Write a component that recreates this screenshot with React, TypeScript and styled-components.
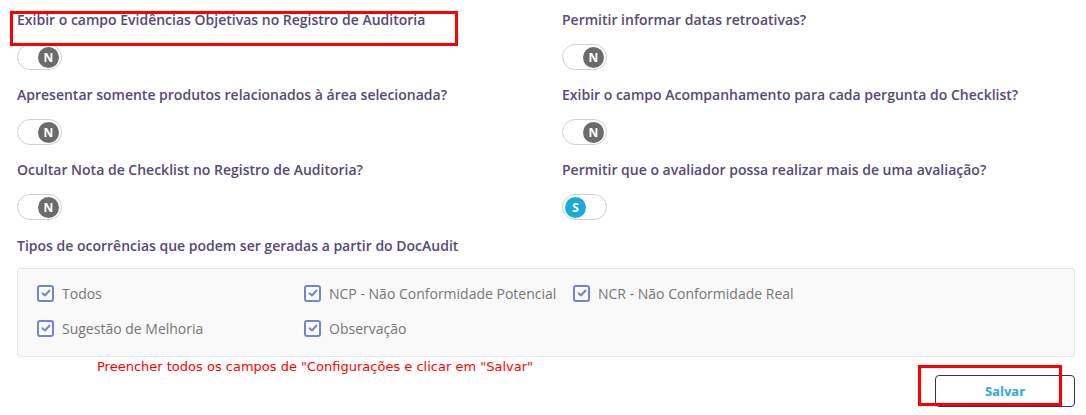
import React from "react";
import styled, { createGlobalStyle } from "styled-components";

const Global = createGlobalStyle`
  html, body { margin: 0; padding: 0; background: #ffffff; }
  body { font-family: "Open Sans", "Noto Sans", sans-serif; }
`;

const Page = styled.div`
  position: relative;
  width: 1086px;
  height: 415px;
  box-sizing: border-box;
  padding: 11px 11px 0 17px;
`;

const Grid = styled.div`
  display: grid;
  grid-template-columns: 545px 1fr;
  row-gap: 16px;
`;

const Field = styled.div`
  display: flex;
  flex-direction: column;
  align-items: flex-start;
  gap: 15px;
  height: 59px;
`;

const Label = styled.div`
  font-size: 14px;
  font-weight: 600;
  line-height: 18px;
  color: #574878;
  white-space: nowrap;
`;

const Toggle = styled.div<{ $on?: boolean }>`
  width: 45px;
  height: 26px;
  box-sizing: border-box;
  border: 1px solid #cfcfcf;
  border-radius: 13px;
  background: #fff;
  display: flex;
  align-items: center;
  justify-content: ${(p) => (p.$on ? "flex-start" : "flex-end")};
  padding: 0 2px;
`;

const Knob = styled.div<{ $on?: boolean }>`
  width: 21px;
  height: 21px;
  border-radius: 50%;
  background: ${(p) => (p.$on ? "#19acd6" : "#6b6b6b")};
  color: #fff;
  font-size: 12px;
  font-weight: 700;
  display: flex;
  align-items: center;
  justify-content: center;
`;

const SectionLabel = styled(Label)`
  margin-top: 17px;
`;

const Box = styled.div`
  margin-top: 13px;
  box-sizing: border-box;
  height: 89px;
  background: #f9f9f9;
  border: 1px solid #e6e6e6;
  border-radius: 3px;
  padding: 14px 0 0 19px;
  display: grid;
  grid-template-columns: 267px 269px 1fr;
  grid-auto-rows: 20px;
  row-gap: 15px;
`;

const Check = styled.div`
  display: flex;
  align-items: center;
  gap: 8px;
  font-size: 14px;
  color: #767676;
  white-space: nowrap;
`;

const CheckBox = styled.span`
  width: 17px;
  height: 17px;
  box-sizing: border-box;
  border: 2px solid #6f86d6;
  border-radius: 3px;
  background: #fff;
  display: flex;
  align-items: center;
  justify-content: center;
`;

const Footer = styled.div`
  display: flex;
  flex-direction: column;
`;

const Warning = styled.div`
  font-family: "DejaVu Sans", Verdana, sans-serif;
  font-size: 13px;
  line-height: 16px;
  color: #ff0000;
  padding-left: 80px;
  margin-top: 2px;
  white-space: nowrap;
`;

const ButtonRow = styled.div`
  display: flex;
  justify-content: flex-end;
`;

const SaveButton = styled.button`
  width: 140px;
  height: 32px;
  border: 1px solid #3b2a6c;
  border-radius: 4px;
  background: #fff;
  color: #2aa9dc;
  font-family: "Open Sans", sans-serif;
  font-size: 13px;
  font-weight: 700;
  cursor: pointer;
`;

const Highlight = styled.div<{ $x: number; $y: number; $w: number; $h: number }>`
  position: absolute;
  left: ${(p) => p.$x}px;
  top: ${(p) => p.$y}px;
  width: ${(p) => p.$w}px;
  height: ${(p) => p.$h}px;
  box-sizing: border-box;
  border: 3px solid #ff0000;
  pointer-events: none;
`;

const CheckIcon = () => (
  <svg width="10" height="10" viewBox="0 0 10 10">
    <path d="M1.5 5.2 L4 7.5 L8.5 2.5" fill="none" stroke="#6f86d6" strokeWidth="2" strokeLinecap="round" strokeLinejoin="round" />
  </svg>
);

const fields: { label: string; on?: boolean }[] = [
  { label: "Exibir o campo Evidências Objetivas no Registro de Auditoria" },
  { label: "Permitir informar datas retroativas?" },
  { label: "Apresentar somente produtos relacionados à área selecionada?" },
  { label: "Exibir o campo Acompanhamento para cada pergunta do Checklist?" },
  { label: "Ocultar Nota de Checklist no Registro de Auditoria?" },
  { label: "Permitir que o avaliador possa realizar mais de uma avaliação?", on: true },
];

const checks = [
  "Todos",
  "NCP - Não Conformidade Potencial",
  "NCR - Não Conformidade Real",
  "Sugestão de Melhoria",
  "Observação",
];

export default function App() {
  return (
    <>
      <Global />
      <Page>
        <Grid>
          {fields.map((f) => (
            <Field key={f.label}>
              <Label>{f.label}</Label>
              <Toggle $on={f.on}>
                <Knob $on={f.on}>{f.on ? "S" : "N"}</Knob>
              </Toggle>
            </Field>
          ))}
        </Grid>
        <SectionLabel>Tipos de ocorrências que podem ser geradas a partir do DocAudit</SectionLabel>
        <Box>
          {checks.map((c) => (
            <Check key={c}>
              <CheckBox>
                <CheckIcon />
              </CheckBox>
              {c}
            </Check>
          ))}
        </Box>
        <Footer>
          <Warning>Preencher todos os campos de "Configurações e clicar em "Salvar"</Warning>
          <ButtonRow>
            <SaveButton>Salvar</SaveButton>
          </ButtonRow>
        </Footer>
        <Highlight $x={10} $y={11} $w={448} $h={35} />
        <Highlight $x={918} $y={365} $w={144} $h={41} />
      </Page>
    </>
  );
}
